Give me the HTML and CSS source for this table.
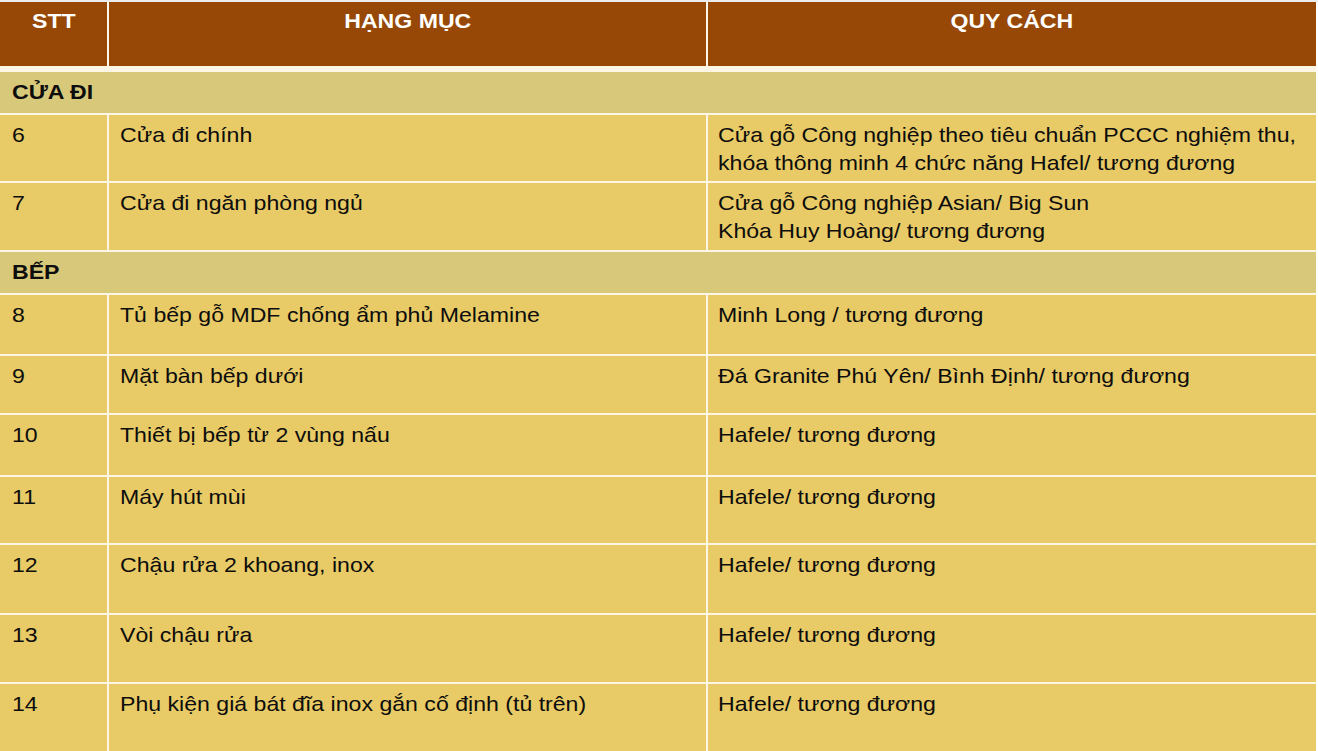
FILE: index.html
```html
<!DOCTYPE html>
<html lang="vi">
<head>
<meta charset="utf-8">
<title>Bảng quy cách</title>
<link rel="stylesheet" href="styles.css">
</head>
<body>
<div class="sheet">
  <div class="cell head"><span class="t">STT</span></div>
  <div class="cell head"><span class="t">HẠNG MỤC</span></div>
  <div class="cell head"><span class="t">QUY CÁCH</span></div>

  <div class="cell section"><span class="t">CỬA ĐI</span></div>

  <div class="cell c1"><span class="t">6</span></div>
  <div class="cell c2"><span class="t">Cửa đi chính</span></div>
  <div class="cell c3"><span class="t">Cửa gỗ Công nghiệp theo tiêu chuẩn PCCC nghiệm thu,<br>khóa thông minh 4 chức năng Hafel/ tương đương</span></div>

  <div class="cell c1"><span class="t">7</span></div>
  <div class="cell c2"><span class="t">Cửa đi ngăn phòng ngủ</span></div>
  <div class="cell c3"><span class="t">Cửa gỗ Công nghiệp Asian/ Big Sun<br>Khóa Huy Hoàng/ tương đương</span></div>

  <div class="cell section"><span class="t">BẾP</span></div>

  <div class="cell c1"><span class="t">8</span></div>
  <div class="cell c2"><span class="t">Tủ bếp gỗ MDF chống ẩm phủ Melamine</span></div>
  <div class="cell c3"><span class="t">Minh Long / tương đương</span></div>

  <div class="cell c1"><span class="t">9</span></div>
  <div class="cell c2"><span class="t">Mặt bàn bếp dưới</span></div>
  <div class="cell c3"><span class="t">Đá Granite Phú Yên/ Bình Định/ tương đương</span></div>

  <div class="cell c1"><span class="t">10</span></div>
  <div class="cell c2"><span class="t">Thiết bị bếp từ 2 vùng nấu</span></div>
  <div class="cell c3"><span class="t">Hafele/ tương đương</span></div>

  <div class="cell c1"><span class="t">11</span></div>
  <div class="cell c2"><span class="t">Máy hút mùi</span></div>
  <div class="cell c3"><span class="t">Hafele/ tương đương</span></div>

  <div class="cell c1"><span class="t">12</span></div>
  <div class="cell c2"><span class="t">Chậu rửa 2 khoang, inox</span></div>
  <div class="cell c3"><span class="t">Hafele/ tương đương</span></div>

  <div class="cell c1"><span class="t">13</span></div>
  <div class="cell c2"><span class="t">Vòi chậu rửa</span></div>
  <div class="cell c3"><span class="t">Hafele/ tương đương</span></div>

  <div class="cell c1"><span class="t">14</span></div>
  <div class="cell c2"><span class="t">Phụ kiện giá bát đĩa inox gắn cố định (tủ trên)</span></div>
  <div class="cell c3"><span class="t">Hafele/ tương đương</span></div>
</div>
</body>
</html>
```

FILE: styles.css
```css
html, body {
  margin: 0;
  padding: 0;
  background: #ffffff;
}

body {
  border-top: 2px solid #ececec;
  font-family: "Liberation Sans", Arial, sans-serif;
  font-size: 21px;
  line-height: 28px;
  color: #0d0d0d;
  overflow: hidden;
  height: 751px;
  box-sizing: border-box;
}

.sheet {
  width: 1316px;
  display: grid;
  grid-template-columns: 107px 597px 608px;
  grid-template-rows: 68px 41px 66px 67px 41px 59px 57px 60px 66px 68px 67px 67px;
  gap: 2px;
  background: #fdf6e4;
}

.cell {
  background: #e8ca66;
  padding-top: 6px;
  overflow: hidden;
  white-space: nowrap;
}

.t {
  display: inline-block;
  transform: scaleX(1.1);
  transform-origin: left top;
}

.c1 {
  padding-left: 12px;
}

.c2 {
  padding-left: 11px;
}

.c3 {
  padding-left: 10px;
}

.head {
  background: #974806;
  color: #ffffff;
  font-weight: bold;
  text-align: center;
  padding-top: 5px;
  margin-bottom: 4px;
}

.head .t {
  transform-origin: center top;
}

.section {
  grid-column: 1 / -1;
  background: #d8c87a;
  font-weight: bold;
  padding-left: 12px;
}
```
